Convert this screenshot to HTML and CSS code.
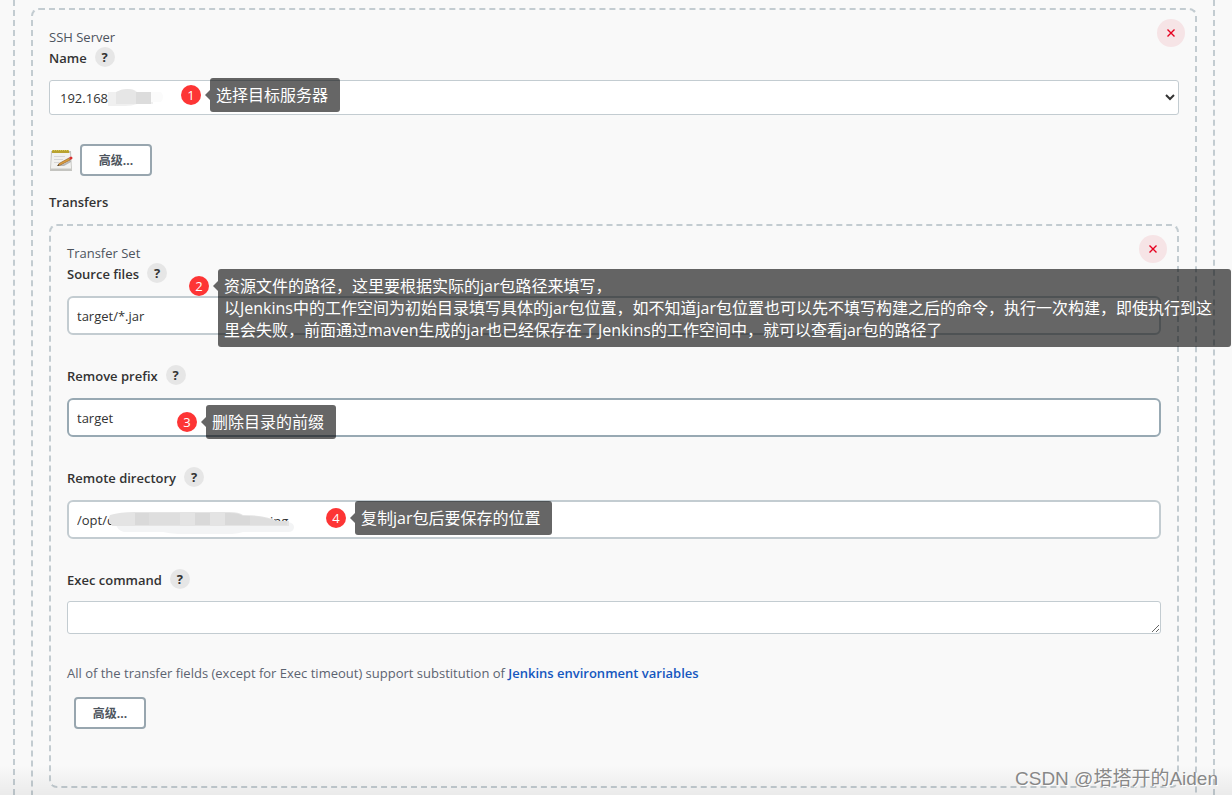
FILE: index.html
```html
<!DOCTYPE html>
<html lang="zh-CN">
<head>
<meta charset="utf-8">
<title>SSH Server - Jenkins</title>
<meta name="viewport" content="width=device-width, initial-scale=1">
<link rel="stylesheet" href="styles.css">
</head>
<body>
<main class="page">
  <div class="chunk chunk-outer">
    <section class="chunk chunk-server">
      <button class="remove" type="button" aria-label="Remove server"><svg viewBox="0 0 10 10" width="10" height="10"><path d="M1.5 1.5l7 7M8.5 1.5l-7 7"/></svg></button>
      <div class="title">SSH Server</div>
      <div class="label-row"><label for="server">Name</label><button class="help" type="button">?</button></div>
      <div class="field">
        <select id="server" class="control select"><option>192.168</option></select>
        <svg class="smudge smudge-ip" viewBox="0 0 60 18" width="60" height="18" aria-hidden="true">
          <path fill="#f0f0f0" d="M0 3h9q5-3 10-3 8 0 10 3h16v12H29q-5 2-12 2H0z"/>
          <path fill="#e6e6e6" d="M8 3q5-3 11-3 7 0 9 3v12H8z"/>
          <path fill="#dcdcdc" d="M28 3h15v12H28z"/>
          <path fill="#fbfbfb" d="M43 3h10q4 5 0 10H43z"/>
        </svg>
        <div class="callout callout-1"><span class="number">1</span><p class="bubble">选择目标服务器</p></div>
      </div>
      <div class="actions">
        <svg class="notepad" viewBox="0 0 24 24" width="24" height="24" aria-hidden="true">
          <path fill="#c4c4c0" d="M2 3h20l1 20H1z"/>
          <path fill="#f1f1ef" d="M3 5h18l1 15H2z"/>
          <path fill="#dcdcd9" d="M2 20h20v1H2z"/>
          <path fill="#b8a22f" d="M3 2h17v3H3z"/>
          <path stroke="#d6c65a" stroke-dasharray="1 1" d="M3 2.5h17"/>
          <path stroke="#d6d6d6" d="M5 8.5h11M5 11.5h9M5 14.5h5"/>
          <path fill="#b5b5b5" d="M8 18l7-2 7-4v2l-7 4z"/>
          <path fill="#dc9b3c" stroke="#8a5a20" stroke-width=".6" d="M10 15.500L20 10l1.200 2-9.700 5-2.500.5z"/>
          <path fill="#4b3b28" d="M8 18l1.400-1.800 1 1.400z"/>
          <path fill="#d92f2f" d="M20 9.600l2-1.100q2 .6 1.400 2.300L21.500 12z"/>
        </svg>
        <button class="advanced" type="button">高级...</button>
      </div>
      <div class="transfers">Transfers</div>
      <section class="chunk chunk-transfer">
        <button class="remove" type="button" aria-label="Remove transfer set"><svg viewBox="0 0 10 10" width="10" height="10"><path d="M1.5 1.5l7 7M8.5 1.5l-7 7"/></svg></button>
        <div class="title">Transfer Set</div>
        <div class="label-row"><label for="source">Source files</label><button class="help" type="button">?</button></div>
        <div class="field">
          <input id="source" class="control text" type="text" value="target/*.jar">
          <div class="callout callout-2"><span class="number">2</span><p class="bubble">资源文件的路径，这里要根据实际的jar包路径来填写，<br>以Jenkins中的工作空间为初始目录填写具体的jar包位置，如不知道jar包位置也可以先不填写构建之后的命令，执行一次构建，即使执行到这<br>里会失败，前面通过maven生成的jar也已经保存在了Jenkins的工作空间中，就可以查看jar包的路径了</p></div>
        </div>
        <div class="label-row spaced"><label for="prefix">Remove prefix</label><button class="help" type="button">?</button></div>
        <div class="field">
          <input id="prefix" class="control text hovered" type="text" value="target">
          <div class="callout callout-3"><span class="number">3</span><p class="bubble">删除目录的前缀</p></div>
        </div>
        <div class="label-row spaced"><label for="remote">Remote directory</label><button class="help" type="button">?</button></div>
        <div class="field">
          <input id="remote" class="control text" type="text" value="/opt/c">
          <svg class="smudge smudge-path" viewBox="0 0 190 22" width="190" height="22" aria-hidden="true">
            <text x="162" y="14">ing</text>
            <path fill="#f3f4f5" d="M8 10h172q6 1 6 5 0 5-6 5h-45q-10 3-35 3-30 0-45-3H16q-8-2-8-10z"/>
            <path fill="#e4e4e4" d="M2 3q10-3 25-3h94q10 0 14 3 22 0 34 6h12v5H4q-5-6-2-11z"/>
            <path fill="#d9d9d9" d="M27 1h14v12H27zM87 1h15v12H87zM117 1h4q10 0 14 3h7v9h-25z"/>
            <path fill="#dedede" d="M41 1h31v12H41zM142 4q15 1 25 5h12v4h-37z"/>
          </svg>
          <div class="callout callout-4"><span class="number">4</span><p class="bubble">复制jar包后要保存的位置</p></div>
        </div>
        <div class="label-row spaced"><label for="exec">Exec command</label><button class="help" type="button">?</button></div>
        <div class="field field-area"><textarea id="exec" class="control area" rows="1"></textarea></div>
        <p class="note">All of the transfer fields (except for Exec timeout) support substitution of <a href="#env">Jenkins environment variables</a></p>
        <div class="actions-inner"><button class="advanced" type="button">高级...</button></div>
      </section>
    </section>
  </div>
  <div class="shade"></div>
  <div class="watermark">CSDN @塔塔开的Aiden</div>
</main>
</body>
</html>
```

FILE: styles.css
```css
* { box-sizing: border-box; }
body {
  margin: 0;
  background: #fff;
  color: #333;
  font: 13px/21px "Open Sans", "Noto Sans CJK SC", sans-serif;
}
button, input, select, textarea { font: inherit; color: inherit; }
p { margin: 0; }
.page { position: relative; padding: 0 17px 0 13px; background: #f9f9f9; overflow: hidden; }
.chunk { position: relative; padding: 17px 16px 16px; border: 2px dashed #c3ccd1; border-radius: 8px; }
.chunk-outer { padding-top: 8px; padding-bottom: 0; border-top: 0; border-bottom: 0; border-radius: 0; }
.chunk-server { padding-bottom: 7px; border-bottom: 0; border-radius: 8px 8px 0 0; }
.chunk-transfer { padding-bottom: 57px; }
.remove {
  position: absolute; top: 9px; right: 10px;
  display: grid; place-items: center;
  width: 28px; height: 28px; padding: 0;
  border: 0; border-radius: 50%; background: #f6e4e6;
}
.remove path { stroke: #e6001f; stroke-width: 1.4; fill: none; }
.title { height: 21px; color: #4d545d; }
.label-row { display: flex; align-items: flex-start; gap: 8px; height: 21px; font-weight: 600; }
.label-row.spaced { margin-top: 31px; }
.help {
  width: 20px; height: 20px; margin-top: -1px; padding: 0;
  border: 0; border-radius: 50%; background: #e6e6e6;
  font-weight: 700; line-height: 20px;
}
.field { position: relative; display: flex; margin-top: 11px; }
.field-area { margin-top: 10px; }
.control {
  width: 100%; margin: 0; border: 1px solid #c3ccd1; border-radius: 3px;
  background: #fff; outline: 0;
}
.select { height: 35px; padding: 0 6px; }
.text { height: 39px; padding: 0 8px; border-width: 2px; border-radius: 6px; }
.hovered { border-color: #98a9b3; }
.area { display: block; height: 33px; padding: 5px 8px; resize: vertical; }
.actions { display: flex; align-items: center; gap: 7px; margin-top: 29px; }
.advanced {
  width: 72px; height: 32px; padding: 0;
  border: 2px solid #98a6af; border-radius: 4px; background: #fff;
  color: #4d545d; font-size: 12px; font-weight: 700;
}
.transfers { margin: 16px 0 11px; font-weight: 600; }
.note { margin-top: 29px; color: #5c6370; }
.note a { color: #1557bf; font-weight: 600; text-decoration: none; }
.actions-inner { margin: 13px 0 0 7px; display: flex; }
.smudge { position: absolute; pointer-events: none; }
.smudge-ip { left: 59px; top: 9px; }
.smudge-path { left: 41px; top: 12px; }
.smudge text { fill: #333; }
.callout { position: absolute; z-index: 2; display: flex; align-items: flex-start; gap: 9px; }
.callout-1 { left: 132px; top: -2px; }
.callout-2 { left: 122px; right: -70px; top: -27px; }
.callout-3 { left: 110px; top: 7px; }
.callout-4 { left: 259px; top: 1px; }
.number {
  flex: none; width: 20px; height: 20px; margin-top: 7px;
  border-radius: 50%; background: #fd3535; color: #fff;
  line-height: 20px; text-align: center;
}
.bubble {
  position: relative; flex: 1; padding: 6px 12px 6px 6px;
  border-radius: 3px; background: rgba(0, 0, 0, .6); color: #fff;
  font-size: 16px; line-height: 22px; white-space: nowrap;
}
.bubble::before {
  content: ""; position: absolute; left: -5px; top: 12px;
  border: 5px solid transparent; border-left: 0; border-right-color: rgba(0, 0, 0, .6);
}
.shade {
  position: absolute; left: 0; right: 0; bottom: 0; height: 30px;
  background: linear-gradient(rgba(0, 0, 0, 0), rgba(0, 0, 0, .06));
}
.watermark {
  position: absolute; right: 14px; bottom: 4px; z-index: 3;
  color: #888; text-shadow: 1px 1px 0 #fff;
  font: 19px/24px "Liberation Sans", "Noto Sans CJK SC", sans-serif;
}
```
